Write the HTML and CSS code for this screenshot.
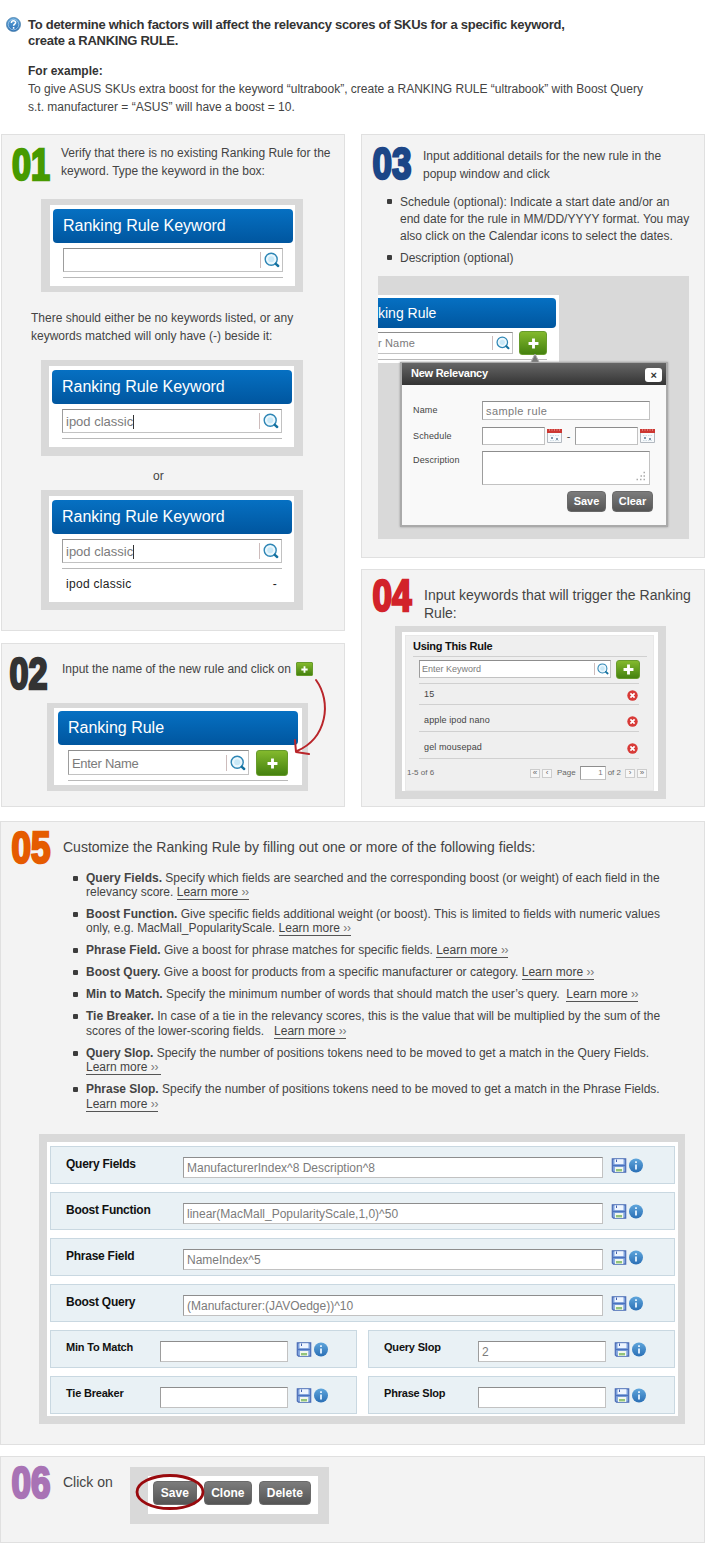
FILE: index.html
```
<!DOCTYPE html>
<html lang="en">
<head>
<meta charset="utf-8">
<title>Ranking Rule guide</title>
<link rel="stylesheet" href="styles.css">
</head>
<body>
<svg class="defs" width="0" height="0">
  <defs>
    <linearGradient id="ball" x1="0" y1="0" x2="0" y2="1"><stop offset="0" stop-color="#5fa6dc"/><stop offset="1" stop-color="#2a6fb5"/></linearGradient>
    <symbol id="i-search" viewBox="0 0 16 16"><circle cx="7.2" cy="7.2" r="6" fill="#eaf7fd" stroke="#2e86b5" stroke-width="1.4"/><circle cx="7.2" cy="7.2" r="3" fill="#c8e8f7"/><path d="M11.8 11.8l2.4 2.2" stroke="#14719f" stroke-width="2.4" stroke-linecap="round"/></symbol>
    <symbol id="i-save" viewBox="0 0 15 15"><path d="M.8.8h13.4v13.4H2L.8 13z" fill="#7fa3dd" stroke="#4c6db5" stroke-width="1.2"/><path d="M3 1.2h9v5H3z" fill="#eef5ff"/><path d="M5 1.5v2.5" stroke="#4463ae"/><path d="M1.5 7.5h12" stroke="#4b72bf" stroke-width="1.4"/><path d="M3.4 9h8.4v5H3.4z" fill="#f2f7ee"/><path d="M4.5 11h6v2.4h-6z" fill="#93c47b"/></symbol>
    <symbol id="i-info" viewBox="0 0 15 15"><circle cx="7.5" cy="7.5" r="7" fill="url(#ball)"/><path d="M7.5 3.2v1.8M7.5 6.4v5" stroke="#e8f4ff" stroke-width="1.8"/></symbol>
    <symbol id="i-cal" viewBox="0 0 15 14"><path d="M.5.5h14v13H.5z" fill="#f7fafc" stroke="#b3b9c0"/><path d="M0 0h15v4H0z" fill="#cc3732"/><path d="M2 1h11" stroke="#f3b9b4" stroke-dasharray="1 1.5"/><path d="M3 6.5h9M3 11.5h9" stroke="#cfdbe3" stroke-dasharray="1.5 1"/><path d="M4 9h2M9 10h2" stroke="#5b7a92" stroke-width="1.6"/></symbol>
    <symbol id="i-del" viewBox="0 0 11 11"><circle cx="5.5" cy="5.5" r="5.2" fill="#d83a37"/><path d="M3.4 3.4l4.2 4.2M7.6 3.4L3.4 7.6" stroke="#fff" stroke-width="1.7"/></symbol>
    <symbol id="i-plus" viewBox="0 0 10 10"><path d="M5 .5v9M.5 5h9" stroke="#fff" stroke-width="2.6"/></symbol>
  </defs>
</svg>

<main class="page">
  <header class="intro">
    <svg class="help" viewBox="0 0 15 15"><circle cx="7.5" cy="7.5" r="7" fill="url(#ball)" stroke="#4d80ab" stroke-width=".8"/><circle cx="7.5" cy="7.5" r="5.3" fill="none" stroke="#a8cdea" stroke-width=".8"/><path d="M5.4 5.9c0-2.9 4.2-2.7 4.2-.3 0 1.5-2 1.6-2 3.2M7.6 10v1.7" fill="none" stroke="#fff" stroke-width="1.5"/></svg>
    <div>
      <h1>To determine which factors will affect the relevancy scores of SKUs for a specific keyword,<br>create a RANKING RULE.</h1>
      <p class="example"><b>For example:</b><br>To give ASUS SKUs extra boost for the keyword “ultrabook”, create a RANKING RULE “ultrabook” with Boost Query<br>s.t. manufacturer = “ASUS” will have a boost = 10.</p>
    </div>
  </header>

  <div class="columns">
    <div class="column">
      <section class="card card-1">
        <div class="step">
          <svg class="num n1" viewBox="0 0 40 36"><text x="1" y="33" textLength="38" lengthAdjust="spacingAndGlyphs">01</text></svg>
          <p class="lead">Verify that there is no existing Ranking Rule for the<br>keyword. Type the keyword in the box:</p>
        </div>
        <div class="frame f1">
          <div class="bar">Ranking Rule Keyword</div>
          <div class="field search"><span></span><svg><use href="#i-search"/></svg></div>
          <hr>
        </div>
        <p class="note">There should either be no keywords listed, or any<br>keywords matched will only have (-) beside it:</p>
        <div class="frame f2">
          <div class="bar">Ranking Rule Keyword</div>
          <div class="field search"><span class="typed">ipod classic</span><svg><use href="#i-search"/></svg></div>
          <hr>
        </div>
        <p class="or">or</p>
        <div class="frame f3">
          <div class="bar">Ranking Rule Keyword</div>
          <div class="field search"><span class="typed">ipod classic</span><svg><use href="#i-search"/></svg></div>
          <hr>
          <div class="result"><span>ipod classic</span><span>-</span></div>
        </div>
      </section>

      <section class="card card-2">
        <div class="step">
          <svg class="num n2" viewBox="0 0 40 36"><text x=".5" y="33" textLength="38" lengthAdjust="spacingAndGlyphs">02</text></svg>
          <p class="lead">Input the name of the new rule and click on</p>
          <span class="add tiny"><svg><use href="#i-plus"/></svg></span>
        </div>
        <div class="frame f4">
          <div class="bar">Ranking Rule</div>
          <div class="line">
            <div class="field search"><span>Enter Name</span><svg><use href="#i-search"/></svg></div>
            <span class="add"><svg><use href="#i-plus"/></svg></span>
          </div>
          <hr>
        </div>
        <svg class="arrow" viewBox="0 0 40 84"><path d="M26 3C42 25 37 61 7 74M5 63L6 75L19 77" fill="none" stroke="#b9252a" stroke-width="2" stroke-linecap="round" stroke-linejoin="round"/></svg>
      </section>
    </div>

    <div class="column">
      <section class="card card-3">
        <div class="step">
          <svg class="num n3" viewBox="0 0 40 36"><text x=".5" y="33" textLength="39" lengthAdjust="spacingAndGlyphs">03</text></svg>
          <p class="lead">Input additional details for the new rule in the<br>popup window and click</p>
        </div>
        <ul class="options">
          <li>Schedule (optional): Indicate a start date and/or an<br>end date for the rule in MM/DD/YYYY format. You may<br>also click on the Calendar icons to select the dates.</li>
          <li>Description (optional)</li>
        </ul>
        <div class="stage">
          <div class="clip">
            <div class="bar">king Rule</div>
            <div class="line">
              <div class="field search"><span>r Name</span><svg><use href="#i-search"/></svg></div>
              <span class="add"><svg><use href="#i-plus"/></svg></span>
            </div>
            <hr>
          </div>
          <svg class="pointer" viewBox="0 0 12 10"><path d="M6 0l5 10H1z" fill="#777" stroke="#aaa"/></svg>
          <div class="popup">
            <div class="popup-head"><b>New Relevancy</b><span class="close">×</span></div>
            <div class="form">
              <div class="form-row r1"><label>Name</label><div class="field">sample rule</div></div>
              <div class="form-row r2"><label>Schedule</label><div class="field date"></div><svg class="cal"><use href="#i-cal"/></svg><span class="dash">-</span><div class="field date"></div><svg class="cal"><use href="#i-cal"/></svg></div>
              <div class="form-row r3"><label>Description</label><div class="field area"><svg viewBox="0 0 10 10"><path d="M7.5 1.5h1.5M4.5 5h1.5M7.5 5h1.5M.5 8.5h1.5M4 8.5h1.5M7.5 8.5h1.5" stroke="#aaa" stroke-width="1.4"/></svg></div></div>
              <div class="buttons"><span class="btn">Save</span><span class="btn">Clear</span></div>
            </div>
          </div>
        </div>
      </section>

      <section class="card card-4">
        <div class="step">
          <svg class="num n4" viewBox="0 0 40 36"><text x=".5" y="33" textLength="39" lengthAdjust="spacingAndGlyphs">04</text></svg>
          <p class="lead big">Input keywords that will trigger the Ranking<br>Rule:</p>
        </div>
        <div class="frame f5">
          <div class="panel">
            <h2>Using This Rule</h2>
            <div class="line">
              <div class="field search"><span>Enter Keyword</span><svg><use href="#i-search"/></svg></div>
              <span class="add"><svg><use href="#i-plus"/></svg></span>
            </div>
            <ul class="words">
              <li>15<svg><use href="#i-del"/></svg></li>
              <li>apple ipod nano<svg><use href="#i-del"/></svg></li>
              <li>gel mousepad<svg><use href="#i-del"/></svg></li>
            </ul>
            <div class="pager"><span class="count">1-5 of 6</span><i>«</i><i>‹</i><span class="pg">Page</span><span class="field">1</span><span class="of">of 2</span><i>›</i><i>»</i></div>
          </div>
        </div>
      </section>
    </div>
  </div>

  <section class="card card-5">
    <div class="step">
      <svg class="num n5" viewBox="0 0 40 36"><text x=".5" y="33" textLength="39" lengthAdjust="spacingAndGlyphs">05</text></svg>
      <p class="lead big">Customize the Ranking Rule by filling out one or more of the following fields:</p>
    </div>
    <ul class="fields">
      <li><b>Query Fields.</b> Specify which fields are searched and the corresponding boost (or weight) of each field in the<br>relevancy score. <a>Learn more <q>››</q></a></li>
      <li><b>Boost Function.</b> Give specific fields additional weight (or boost). This is limited to fields with numeric values<br>only, e.g. MacMall_PopularityScale. <a>Learn more <q>››</q></a></li>
      <li><b>Phrase Field.</b> Give a boost for phrase matches for specific fields. <a>Learn more <q>››</q></a></li>
      <li><b>Boost Query.</b> Give a boost for products from a specific manufacturer or category. <a>Learn more <q>››</q></a></li>
      <li><b>Min to Match.</b> Specify the minimum number of words that should match the user’s query. &nbsp;<a>Learn more <q>››</q></a></li>
      <li class="loose"><b>Tie Breaker.</b> In case of a tie in the relevancy scores, this is the value that will be multiplied by the sum of the<br>scores of the lower-scoring fields. &nbsp;&nbsp;<a>Learn more <q>››</q></a></li>
      <li><b>Query Slop.</b> Specify the number of positions tokens need to be moved to get a match in the Query Fields.<br><a>Learn more <q>››</q>&nbsp;</a></li>
      <li class="loose"><b>Phrase Slop.</b> Specify the number of positions tokens need to be moved to get a match in the Phrase Fields.<br><a>Learn more <q>››</q></a></li>
    </ul>
    <div class="frame f6">
      <div class="setting"><b>Query Fields</b><div class="field">ManufacturerIndex^8 Description^8</div><svg><use href="#i-save"/></svg><svg><use href="#i-info"/></svg></div>
      <div class="setting"><b>Boost Function</b><div class="field">linear(MacMall_PopularityScale,1,0)^50</div><svg><use href="#i-save"/></svg><svg><use href="#i-info"/></svg></div>
      <div class="setting"><b>Phrase Field</b><div class="field">NameIndex^5</div><svg><use href="#i-save"/></svg><svg><use href="#i-info"/></svg></div>
      <div class="setting"><b>Boost Query</b><div class="field">(Manufacturer:(JAVOedge))^10</div><svg><use href="#i-save"/></svg><svg><use href="#i-info"/></svg></div>
      <div class="setting half"><b>Min To Match</b><div class="field"></div><svg><use href="#i-save"/></svg><svg><use href="#i-info"/></svg></div>
      <div class="setting half"><b>Query Slop</b><div class="field">2</div><svg><use href="#i-save"/></svg><svg><use href="#i-info"/></svg></div>
      <div class="setting half"><b>Tie Breaker</b><div class="field"></div><svg><use href="#i-save"/></svg><svg><use href="#i-info"/></svg></div>
      <div class="setting half"><b>Phrase Slop</b><div class="field"></div><svg><use href="#i-save"/></svg><svg><use href="#i-info"/></svg></div>
    </div>
  </section>

  <section class="card card-6">
    <svg class="num n6" viewBox="0 0 40 36"><text x=".5" y="33" textLength="39" lengthAdjust="spacingAndGlyphs">06</text></svg>
    <p class="lead big">Click on</p>
    <div class="frame f7">
      <span class="btn">Save</span><span class="btn">Clone</span><span class="btn">Delete</span>
      <svg class="ring" viewBox="0 0 70 38"><ellipse cx="35" cy="19" rx="33" ry="16.5" fill="none" stroke="#990a0e" stroke-width="2.8"/></svg>
    </div>
  </section>
</main>
</body>
</html>
```
FILE: styles.css
```
* { box-sizing: border-box; margin: 0; padding: 0; }
body { width: 706px; height: 1550px; background: #fff; color: #444; font: 12px/18px "Liberation Sans", Arial, sans-serif; white-space: nowrap; overflow: hidden; }
.defs { position: absolute; }
svg { display: block; flex: none; }
ul { list-style: none; }
hr { border: 0; border-top: 1px solid #b9b9b9; }

.intro { display: flex; height: 134px; padding: 17px 0 0 6px; }
.help { width: 15px; height: 15px; margin-right: 7px; }
h1 { font-size: 13px; line-height: 16px; color: #333; letter-spacing: -.27px; }
.example { margin-top: 13px; }
.example b { color: #333; }

.columns { display: flex; gap: 16px; padding-left: 1px; }
.column { width: 344px; display: flex; flex-direction: column; }
.card { position: relative; background: #f3f3f3; border: 1px solid #e0e0e0; }
.card-1 { height: 497px; margin-bottom: 12px; }
.card-2 { height: 164px; }
.card-3 { height: 424px; margin-bottom: 11px; }
.card-4 { height: 238px; }
.card-5 { width: 705px; height: 624px; margin-top: 14px; }
.card-6 { width: 705px; height: 87px; margin-top: 11px; display: flex; padding: 9px 0 0 10px; }

.step { display: flex; }
.num { width: 40px; height: 36px; font: 700 43.5px "Liberation Sans", Arial, sans-serif; overflow: visible; stroke-width: 2.6; stroke-linejoin: miter; }
.n1 { fill: #479a00; stroke: #479a00; }
.n2 { fill: #333; stroke: #333; }
.n3 { fill: #1c4687; stroke: #1c4687; }
.n4 { fill: #d2232a; stroke: #d2232a; }
.n5 { fill: #e55b00; stroke: #e55b00; }
.n6 { fill: #a873b5; stroke: #a873b5; }
.card-1 .step { padding: 9px 0 0 9px; height: 64px; gap: 10px; }
.card-2 .step { padding: 12px 0 0 7px; height: 59px; }
.card-3 .step { padding: 12px 0 0 10px; height: 59px; gap: 11px; }
.card-4 .step { padding: 9px 0 0 10px; height: 56px; gap: 12px; }
.card-5 .step { padding: 9px 0 0 10px; height: 49px; gap: 12px; }
.card-1 .num { margin-top: 3px; }
.card-3 .num { margin-top: -1px; }
.card-4 .num, .card-5 .num, .card-6 .num { margin-top: -1px; }
.card-2 .lead { margin: 4px 5px 0 13px; }
.card-4 .lead { margin-top: 7px; }
.card-5 .lead { margin-top: 7px; }
.card-6 .lead { margin: 7px 17px 0 12px; }
.lead.big { font-size: 14px; }

.frame { background: #fff; border: solid #d9d9d9; }
.bar { height: 34px; border-radius: 4px; padding-left: 10px; background: linear-gradient(#0670c2, #00569f); color: #fff; font-size: 16px; line-height: 33px; }
.field { background: #fff; border: 1px solid #c2c2c2; border-top-color: #8d8d8d; border-left-color: #9d9d9d; color: #7b7b7b; overflow: hidden; }
.search { display: flex; align-items: center; height: 24px; font-size: 13px; padding-right: 2px; }
.search span { flex: 1; padding-left: 3px; position: relative; top: 1px; }
.search svg { width: 20px; height: 16px; padding-left: 3px; border-left: 1px solid #cdbcbc; }
.f1, .f2, .f3 { width: 262px; margin-left: 39px; padding: 4px 2px 0 3px; }
.f1 { height: 93px; border-width: 6px 8px 6px 9px; }
.f2 { height: 96px; border-width: 6px 9px 9px 8px; }
.f3 { height: 120px; border-width: 6px 9px 8px 8px; }
.f1 .search, .f2 .search, .f3 .search { margin: 5px 10px 5px 10px; }
.f1 hr, .f2 hr, .f3 hr { margin: 0 10px; }
.typed::after { content: ""; display: inline-block; height: 14px; border-right: 1px solid #333; vertical-align: -3px; }
.note { margin: 17px 0 0 29px; height: 51px; }
.or { margin: 11px 0 5px 151px; }
.result { display: flex; justify-content: space-between; margin: 6px 15px 0 14px; color: #222; letter-spacing: .3px; }

.add { display: flex; align-items: center; justify-content: center; width: 32px; height: 26px; border-radius: 3px; background: linear-gradient(#83b92d, #45820f); border: 1px solid #679b2c; }
.add svg { width: 11px; height: 11px; }
.add.tiny { width: 17px; height: 14px; margin-top: 6px; border-radius: 1px; }
.add.tiny svg { width: 7px; height: 7px; }
.line { display: flex; justify-content: space-between; }
.f4 { width: 261px; height: 88px; margin-left: 45px; border-width: 5px 6px 6px 7px; padding: 3px 4px 0; }
.f4 .line { margin: 5px 10px; height: 26px; margin-bottom: 4px; }
.f4 .search { width: 181px; height: 25px; letter-spacing: -.3px; }
.f4 hr { margin: 0 10px; }
.arrow { position: absolute; left: 288px; top: 33px; width: 40px; height: 84px; }

.options { padding-left: 38px; line-height: 17px; }
.options li { position: relative; margin-bottom: 5px; }
.options li::before, .fields li::before { content: ""; position: absolute; left: -13px; top: 5px; width: 5px; height: 5px; border-radius: 1px; background: #3c3c3c; }
.stage { position: relative; width: 311px; height: 263px; margin: 9px 0 0 16px; background: #d9d9d9; padding-top: 19px; }
.clip { width: 181px; height: 68px; background: #fff; padding-top: 3px; }
.clip .bar { width: 178px; height: 30px; border-radius: 0 4px 4px 0; padding-left: 0; font-size: 14px; line-height: 30px; }
.clip .line { width: 169px; margin-top: 3px; height: 28px; }
.clip .search { width: 135px; height: 22px; margin-top: 1px; border-left: 0; font-size: 11px; letter-spacing: .15px; }
.clip .search span { padding-left: 0; top: 0; }
.clip .search svg { width: 18px; height: 14px; }
.clip .add { width: 28px; height: 24px; }
.clip hr { width: 169px; }
.pointer { position: absolute; left: 151px; top: 78px; width: 12px; height: 10px; }
.popup { position: absolute; left: 22px; top: 86px; width: 268px; height: 165px; border: 2px solid #aaa; border-width: 1px 2px 2px; background: #f9f9f9; box-shadow: 0 0 2px #999; }
.popup-head { display: flex; justify-content: space-between; height: 22px; padding: 0 4px 0 9px; background: linear-gradient(#666, #343434); color: #fff; font-size: 11px; line-height: 20px; letter-spacing: -.25px; }
.close { width: 17px; height: 14px; margin-top: 5px; border-radius: 3px; background: #fff; color: #333; font: bold 11px/14px "Liberation Sans", sans-serif; text-align: center; }
.form { padding: 16px 0 0 11px; font-size: 9px; }
.form-row { display: flex; align-items: flex-start; line-height: 18px; }
.form-row label { width: 69px; letter-spacing: .15px; }
.form-row .field { width: 168px; height: 19px; font-size: 11px; padding-left: 3px; letter-spacing: .4px; }
.r1 { height: 26px; }
.r2 { height: 24px; }
.r3 { height: 40px; }
.form-row .date { width: 63px; height: 18px; }
.cal { width: 15px; height: 14px; margin: 2px 0 0 2px; }
.dash { width: 13px; text-align: center; font-size: 11px; }
.form-row .area { height: 34px; padding: 19px 0 0 153px; }
.area svg { width: 10px; height: 10px; }
.buttons { display: flex; gap: 6px; padding-left: 154px; }
.btn { height: 24px; padding: 0 9px; border-radius: 4px; background: linear-gradient(#7c7c7c, #555); border: 1px solid #6a6a6a; color: #fff; font: bold 12px/22px "Liberation Sans", sans-serif; text-align: center; }
.buttons .btn { width: 39px; height: 21px; padding: 0; font-size: 11px; line-height: 18px; }
.buttons .btn + .btn { width: 41px; }

.f5 { width: 271px; height: 173px; margin-left: 33px; border-width: 6px 8px 8px 7px; padding: 3px 4px 0 3px; }
.panel { height: 156px; background: #efefef; border: 1px solid #e8e8e8; }
h2 { margin: 0 6px 3px 7px; height: 21px; border-bottom: 1px solid #d0d0d0; font-size: 11px; line-height: 20px; color: #111; letter-spacing: -.25px; }
.f5 .line { padding: 0 13px; height: 23px; }
.f5 .search { width: 192px; height: 18px; font-size: 9px; padding-right: 1px; }
.f5 .search span { padding-left: 2px; top: 0; }
.f5 .search svg { width: 15px; height: 12px; padding-left: 2px; }
.f5 .add { width: 24px; height: 19px; }
.words { margin: 0 14px 0 13px; border-top: 1px solid #d0d0d0; font-size: 9px; letter-spacing: .12px; }
.words li { display: flex; justify-content: space-between; height: 27px; padding: 5px 1px 0 5px; border-bottom: 1px solid #d0d0d0; line-height: 21px; }
.words li:first-child { height: 21px; padding-top: 0; }
.words svg { width: 11px; height: 11px; margin-top: 6px; }
.pager { display: flex; align-items: center; height: 18px; margin: 5px 6px 0 1px; font-size: 8px; color: #666; }
.count { flex: 1; }
.pager i { width: 10px; height: 9px; border: 1px solid #ccc; background: #f7f7f7; font: 8px/6px "Liberation Sans", sans-serif; text-align: center; margin-left: 2px; }
.pg { margin: 0 4px 0 5px; }
.pager .field { width: 26px; height: 14px; line-height: 12px; text-align: right; padding-right: 2px; }
.of { margin: 0 2px; }

.fields { padding-left: 85px; height: 263px; line-height: 14px; }
.fields li { position: relative; margin-bottom: 8px; }
.fields .loose { line-height: 15px; margin-bottom: 7px; }
.fields a { border-bottom: 1px solid #555; }
.fields q { quotes: none; color: #777; letter-spacing: -.3px; }

.f6 { width: 646px; height: 290px; margin: 0 0 0 38px; border-width: 8px 7px 8px 8px; padding: 4px 3px 0; display: grid; grid-template-columns: 307px 307px; grid-auto-rows: 38px; gap: 8px 11px; }
.setting { display: flex; grid-column: span 2; background: #e9f1f5; border: 1px solid #c9d8e1; padding-left: 15px; color: #111; }
.setting b { width: 117px; line-height: 34px; letter-spacing: -.25px; }
.setting .field { width: 420px; height: 21px; margin: 10px 8px 0 0; padding-left: 3px; line-height: 20px; }
.setting svg { width: 16px; height: 15px; margin: 11px 1px 0 0; }
.half { grid-column: span 1; }
.half b { width: 94px; font-size: 11px; line-height: 32px; letter-spacing: -.2px; }
.half .field { width: 128px; }

.f7 { position: relative; width: 199px; height: 57px; margin-top: 1px; border-width: 9px 11px 10px 18px; padding: 5px 0 0 5px; display: flex; gap: 7px; }
.f7 .btn:nth-child(1) { width: 44px; padding: 0; }
.f7 .btn:nth-child(2) { width: 48px; padding: 0; }
.f7 .btn:nth-child(3) { width: 52px; padding: 0; }
.ring { position: absolute; left: -13px; top: -3px; width: 70px; height: 38px; }
```
